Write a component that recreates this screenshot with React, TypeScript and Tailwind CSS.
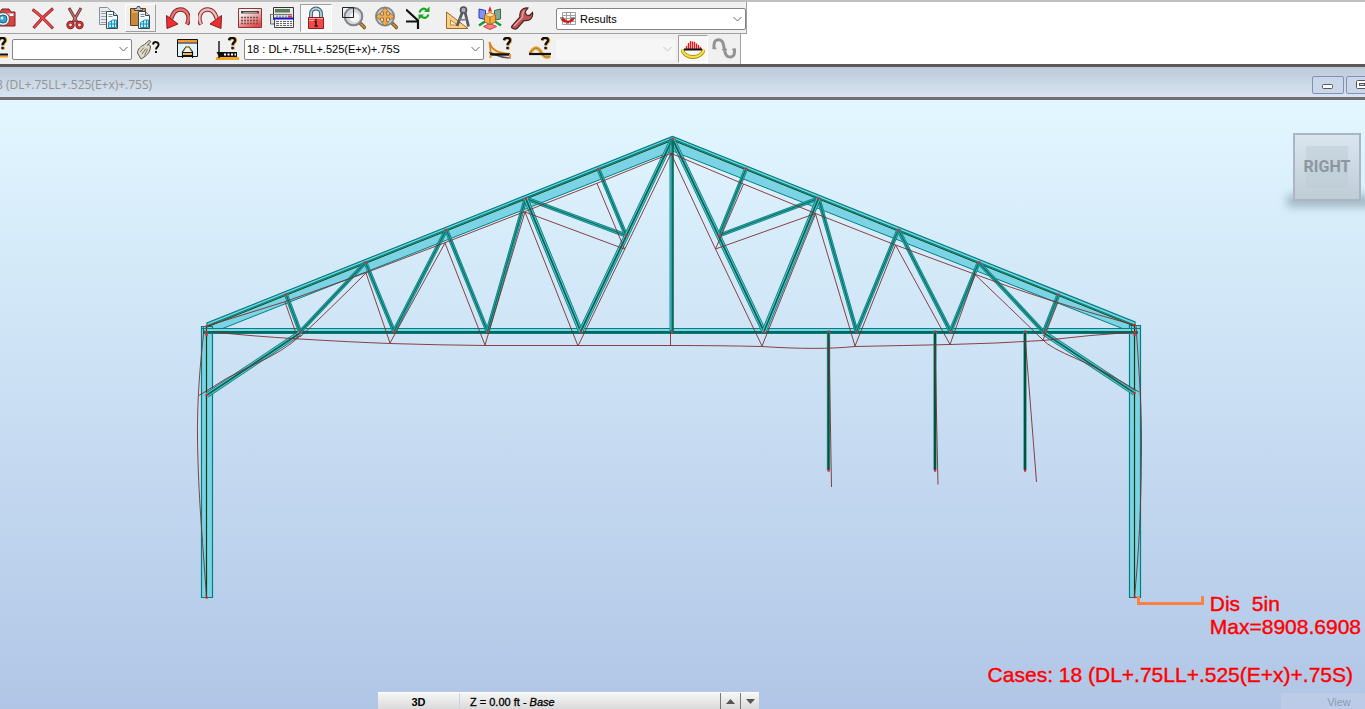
import React from "react";

type P = [number, number];

const Icon = ({ children, className = "" }: { children: React.ReactNode; className?: string }) => (
  <svg viewBox="0 0 24 24" className={`h-6 w-6 shrink-0 ${className}`} fill="none" aria-hidden="true">
    {children}
  </svg>
);

const CameraIcon = () => (
  <Icon>
    <path d="M2 6h6l2-3h7l2 3h4v14H2z" fill="#d94343" stroke="#7e2020" />
    <path d="M3 7h19v3H3z" fill="#f39a9a" />
    <circle cx="11" cy="13" r="6.500" fill="#e8eef2" stroke="#555" />
    <circle cx="11" cy="13" r="4" fill="#3aa0cc" stroke="#23607c" />
    <circle cx="10" cy="12" r="1.500" fill="#c9f1ff" />
    <path d="M18 8h3v2h-3z" fill="#fff" />
  </Icon>
);
const DeleteIcon = () => (
  <Icon>
    <path d="M1.500 3.500C8 8 15 15 22 22.500M22 2.500C14 9 9 14 2.500 22" stroke="#8c2a2a" strokeWidth="3" />
    <path d="M2 4C8 8 15 15 21.500 22M21.500 3C14 9 9 14 3 21.500" stroke="#ee4a4a" strokeWidth="1.600" />
  </Icon>
);
const CutIcon = () => (
  <Icon>
    <path d="M6 2L14 16M18 2L10 16" stroke="#774040" strokeWidth="3" />
    <path d="M6.500 3L13.500 15M17.500 3L10.500 15" stroke="#d77" strokeWidth="1" />
    <circle cx="7.500" cy="19" r="2.800" stroke="#8f1d1d" strokeWidth="2.800" />
    <circle cx="16.500" cy="19" r="2.800" stroke="#8f1d1d" strokeWidth="2.800" />
    <circle cx="7.500" cy="19" r="2.800" stroke="#e04848" strokeWidth="1" />
    <circle cx="16.500" cy="19" r="2.800" stroke="#e04848" strokeWidth="1" />
  </Icon>
);
const Page = () => (
  <>
    <path d="M11.500 5.500h7l4 4v13h-11z" fill="#f7fbfd" stroke="#3f474c" />
    <path d="M18.500 5.500v4h4" fill="#c9d3d8" stroke="#3f474c" />
    <path d="M13.500 8.500h4M13.500 10.500h4" stroke="#6c8da0" />
    <path d="M13.500 21.500v-5l4-2.500h4v7.500zM13.500 18h8M16.500 15v6.500M19.500 14v7.500" stroke="#1494c2" fill="#bfe8f7" />
  </>
);
const CopyIcon = () => (
  <Icon>
    <path d="M4.500 1.500h8l4 4v13h-12z" fill="#e9edf0" stroke="#888f94" />
    <path d="M6 5.500h5M6 7.500h5M6 10.500h5M6 13.500h5M6 16.500h5" stroke="#93a3ad" />
    <Page />
  </Icon>
);
const PasteIcon = () => (
  <Icon>
    <path d="M1.500 2.500h15v17h-15z" fill="#c58a3c" stroke="#6b4513" />
    <path d="M3 4h12v3H3z" fill="#dfa85a" />
    <path d="M5.500 4.500v-2h2l1-2h2l1 2h2v2z" fill="#c5c9cc" stroke="#444" />
    <g transform="translate(-2 0)"><Page /></g>
  </Icon>
);
const UndoIcon = ({ flip = false }: { flip?: boolean }) => (
  <Icon className={flip ? "-scale-x-100" : ""}>
    <path d="M21 18.500c4-8 0-15-7-15-5 0-7.500 4.500-9 9.500" stroke="#7c2a2a" strokeWidth="4.400" />
    <path d="M21 18c4-7.500 0-14.500-7-14.500-5 0-7.500 4.500-9 9.500" stroke={flip ? "#f4b8b8" : "#f07070"} strokeWidth="2.400" />
    <path d="M.500 9.500l.500 13L12 18z" fill="#ec2f2f" stroke="#8c2020" />
  </Icon>
);
const Calc = ({ blue = false }: { blue?: boolean }) => (
  <Icon>
    <defs>
      <linearGradient id="calcBody" x1="0" y1="0" x2="0.600" y2="1">
        <stop offset="0.300" stopColor="#f6eeee" />
        <stop offset="1" stopColor="#e84a4a" />
      </linearGradient>
    </defs>
    {blue ? (
      <>
        <path d="M3.500 1.500h20v12h-20z" fill="#e6e9e6" stroke="#333" />
        <path d="M5 3h15v3.500H5z" fill="#5d7a5d" />
        <path d="M1 8.500h21" stroke="#777" />
        <path d="M6 10.500h12" stroke="#999" strokeWidth="2" strokeDasharray="2 1" />
        <path d="M18 10.500h4" stroke="#e33" strokeWidth="2" />
        <path d="M.500 8v10h4" stroke="#666" fill="#ddd" />
        <path d="M4.500 12.500h19v9h-19z" fill="#f3f3f3" stroke="#444" />
        <path d="M4 12.500h20" stroke="#1717c9" strokeWidth="2" />
        <path d="M6 15.500h16M6 17.500h16M6 19.500h16" stroke="#666" strokeDasharray="3 1 2 1" />
      </>
    ) : (
      <>
        <path d="M.500 2.500h23v19H.500z" fill="url(#calcBody)" stroke="#8c3838" />
        <path d="M3 5h18v2.500H3z" fill="#4a4444" />
        <path d="M5 6.500h14" stroke="#a99" />
        <path d="M3 11.500h18M3 14.500h18M3 17.500h18" stroke="#6d5555" strokeWidth="1.600" strokeDasharray="2 1" />
      </>
    )}
  </Icon>
);
const LockIcon = () => (
  <Icon>
    <path d="M7 13V7.500a5 5 0 0110 0V13" stroke="#445a66" strokeWidth="3.800" />
    <path d="M7 13V7.500a5 5 0 0110 0V13" stroke="#a8d4e6" strokeWidth="1.800" />
    <path d="M4.500 11.500h15v11h-15z" fill="#ee4b4b" stroke="#8c2020" />
    <path d="M5 12.500h14M5 14.500h5" stroke="#fba6a6" />
    <path d="M10.500 15.500h2M12 15v5M10.500 20h3.500M12 12.800v1.500" stroke="#4c0d0d" strokeWidth="1.600" />
  </Icon>
);
const Lens = () => (
  <>
    <path d="M17.500 16.500l6 6" stroke="#6d4b18" strokeWidth="3.600" />
    <path d="M18.500 17.500l4.500 4.500" stroke="#d49a45" strokeWidth="1.600" />
  </>
);
const ZoomWindowIcon = () => (
  <Icon>
    <Lens />
    <circle cx="11.500" cy="10.500" r="8.800" fill="#d3d5d7" stroke="#7f8589" strokeWidth="2" />
    <circle cx="12.500" cy="11.500" r="5" fill="#f4f4f4" />
    <path d="M.500 1.500h11v10H.500z" stroke="#222" />
  </Icon>
);
const ZoomAllIcon = () => (
  <Icon>
    <Lens />
    <circle cx="11" cy="10.500" r="9" fill="#d0d8dd" stroke="#82898e" strokeWidth="2" />
    <path d="M11 1.500l4 4.500h-2.500v3h3V6.500L20.500 10.500l-5 4V12h-3v3.500H15L11 20l-4-4.500h2.500V12h-3v2.500L2 10.500l4.500-4V9h3V6H7z" fill="#f2ab45" stroke="#95602a" strokeWidth=".8" />
  </Icon>
);
const AxesRefreshIcon = () => (
  <Icon>
    <path d="M0 3.500l12 11V23M0 15.500h12" stroke="#111" strokeWidth="2.200" />
    <path d="M13.500 6.500C14.500 3 18 1.500 20.500 4" stroke="#17a81c" strokeWidth="2.200" />
    <path d="M23.500.500V6h-5.500z" fill="#17a81c" />
    <path d="M22.500 8.500C21.500 12 18 13 15.500 10.500" stroke="#17a81c" strokeWidth="2.200" />
    <path d="M12.500 14V8.500H18z" fill="#17a81c" />
  </Icon>
);
const DesignIcon = () => (
  <Icon>
    <path d="M.500 6v16.500H22z" fill="#f8cf85" stroke="#9a682a" />
    <path d="M4.500 14v5h7z" fill="#fff4db" stroke="#b5853f" />
    <path d="M16.500 6l-5.500 14M19 6l3.500 14.500" stroke="#555b60" strokeWidth="2.800" />
    <circle cx="17.500" cy="4" r="3" fill="#a9adb0" stroke="#4e5357" strokeWidth="1.600" />
    <path d="M13.500 12.500c3 2 5 2 7 0" stroke="#7b8185" strokeWidth="1.600" />
  </Icon>
);
const CubeIcon = () => (
  <Icon>
    <path d="M1 3l6.500 1.500v9L1 12z" fill="#8394ee" stroke="#2638c3" />
    <path d="M16.500 4.500L22.500 3v10l-6 1z" fill="#84a894" stroke="#3d6550" />
    <path d="M1 19.500l6-4M23 19.500l-6-4" stroke="#159c38" strokeWidth="2.600" />
    <path d="M5.500 20.500l6.500-3 6.500 3-6.500 3z" fill="#f48484" stroke="#d43b3b" />
    <path d="M6.500 9l5.500-2.500L17.500 9v7L12 18.500 6.500 16z" fill="#f4ac42" stroke="#9e6c20" />
    <path d="M6.500 9l5.500 2 5.500-2L12 6.500z" fill="#ffe2a6" stroke="#9e6c20" strokeWidth=".6" />
    <path d="M12 11v7.500" stroke="#9e6c20" />
    <path d="M12 0l2 5.500h-4z" fill="#e22222" />
  </Icon>
);
const WrenchIcon = () => (
  <Icon>
    <path d="M2 20l8-9c-1-5 2-10 8-9l-3 4 1.500 3 3 .500 3-3c1 6-3 9-8.500 8L7 22.500c-2 1.500-7-.500-5-2.500z" fill="#bf5555" stroke="#4c2525" strokeWidth="1.200" />
    <path d="M4 20l8.500-9c-.500-3 .500-5 2-6.500" stroke="#ee9a9a" strokeWidth="1.600" />
  </Icon>
);
const Question = ({ x = 12, y = 0 }: { x?: number; y?: number }) => (
  <g transform={`translate(${x} ${y})`}>
    <path d="M1.500 3.500C2 0 8.500 0 8 3.500 8 5.500 5.500 5.500 5.500 8.500M5.500 10v2.500" stroke="#f6a623" strokeWidth="2.600" />
    <path d="M1 3.200C1.500 0 7.500 0 7 3.500 7 5.500 4.500 5.500 4.500 8.200M4.500 9.800v2.400" stroke="#111" strokeWidth="2.400" />
  </g>
);
const HalfQueryIcon = () => (
  <Icon>
    <Question x={14} />
    <path d="M4 19.500h20" stroke="#f6a623" strokeWidth="2" />
    <path d="M2 17.500h22" stroke="#111" strokeWidth="2" />
  </Icon>
);
const HandIcon = () => (
  <Icon>
    <path d="M1.500 16c0-4 3-6.500 7-8.500l4.500-4c1.500 0 2 1 1 2L11.500 8c2-.500 3 .500 3 2-.500 4-2 7-5 9L5 22z" fill="#dddac8" stroke="#59594f" />
    <path d="M4 15l4-4.500M6 17l4-5.500M8.500 18.500l3-6.500" stroke="#77756a" />
    <path d="M17 7.500c.500-3.500 6-3 5.500.500 0 2-2.500 2-2.500 4.500M20 14v2" stroke="#111" strokeWidth="2" />
  </Icon>
);
const WindowIcon = () => (
  <Icon>
    <path d="M1.500 2.500h20v17h-20z" fill="#dff5fd" stroke="#111" />
    <path d="M2 3h19v2.500H2z" fill="#ff9a2e" />
    <path d="M2 6h19" stroke="#111" />
    <path d="M6.500 21v-6l3.500-5h3l3.500 5v6M7 15.500h10M6.500 18.500h10" stroke="#111" strokeWidth="1.200" />
    <path d="M7.500 14.500l3-4.500h2l3 4.500" stroke="#f6a623" />
    <path d="M8 17h8" stroke="#f6a623" strokeWidth="1.600" />
  </Icon>
);
const LoadIcon = () => (
  <Icon>
    <path d="M0 21.500h23" stroke="#f6a623" strokeWidth="3" />
    <path d="M3 4v17" stroke="#111" strokeWidth="1.400" />
    <path d="M.500 15L3 20 5.500 15z" fill="#111" />
    <path d="M3 15h18v5H3z" fill="#111" />
    <path d="M8 17.500h12" stroke="#fff" strokeWidth="2" strokeDasharray="2 1.500" />
    <Question />
  </Icon>
);
const MomentIcon = () => (
  <Icon>
    <path d="M1.500 5c2 8 8 11 20 12H3z" fill="#f5e3c0" stroke="#d9861b" strokeWidth="1.800" />
    <path d="M1 15.500c7 1 12 7 22 5" stroke="#555" strokeWidth="1.600" />
    <path d="M2 17.500h20" stroke="#111" strokeWidth="2.400" />
    <path d="M2.500 18v3M22 17v4" stroke="#e8951f" strokeWidth="2" />
    <Question x={15} />
  </Icon>
);
const InfluenceIcon = () => (
  <Icon>
    <path d="M2 16.500C6 9 10 10 13 15c2 4.500 6 6.500 9 4" stroke="#f6a623" strokeWidth="3.500" />
    <path d="M2 16.500C6 9 10 10 13 15c2 4.500 6 6.500 9 4" stroke="#777" strokeWidth="1" />
    <path d="M1 17h22" stroke="#111" strokeWidth="2.200" />
    <Question x={13} />
  </Icon>
);
const DiagramIcon = () => (
  <Icon>
    <path d="M1 12.500c3 10 19 10 22 0" stroke="#a88c1c" strokeWidth="3.800" />
    <path d="M1 12.500c3 10 19 10 22 0" stroke="#fbe33a" strokeWidth="2.200" />
    <path d="M4 12c1-4 4-7 6-8l4 1 4 3 3 4z" fill="#fbd0d0" />
    <path d="M5.500 12V9M7.500 12V6M9.500 12V4M11.500 12V4.500M13.500 12V5M15.500 12V6.500M17.500 12V8M19.500 12v-2" stroke="#e31b1b" strokeWidth="1.200" />
    <path d="M3 12.500h18" stroke="#111" strokeWidth="2" />
  </Icon>
);
const WaveIcon = () => (
  <Icon>
    <path d="M.500 11.500h4M10 12.500h5M20 12.500h3.500" stroke="#999" strokeWidth="1.600" />
    <path d="M2 11.500V8c0-7 8.500-7 9.500 0L13 15c1.500 7 9.500 6.500 9.500 0v-3.500" stroke="#929292" strokeWidth="3" />
  </Icon>
);
const ResultsIcon = () => (
  <svg viewBox="0 0 16 16" className="pointer-events-none absolute top-[3px] left-1 h-4 w-4" fill="none" aria-hidden="true">
    <path d="M2.500 1.500h13v12h-13zM2.500 4.500h13M2.500 7.500h13M2.500 10.500h13M6.500 1.500v12M10.500 1.500v12" fill="#fff" stroke="#a0a0a0" />
    <path d="M1 8h4l1.500 1.500h3L11 8h3v1l-3.500 2.500h-1L8 13l-1.500-1.500H4L1 9z" fill="#d81919" />
    <path d="M0 7h4M11 7h4" stroke="#333" />
  </svg>
);

const Tool = ({ label, children, className = "w-8" }: { label: string; children: React.ReactNode; className?: string }) => (
  <button type="button" aria-label={label} className={`flex h-[28px] shrink-0 items-center justify-center ${className}`}>
    {children}
  </button>
);

const Combo = ({ label, value, disabled = false, className, textClass = "pl-1", children }: {
  label: string; value: string; disabled?: boolean; className: string; textClass?: string; children?: React.ReactNode;
}) => (
  <div className={`relative shrink-0 ${className}`}>
    <select
      aria-label={label}
      disabled={disabled}
      defaultValue={value}
      className={`block h-full w-full appearance-none rounded-[2px] border text-[11px] leading-4 text-black outline-none ${disabled ? "border-[#f4f4f4] bg-[#f6f6f6]" : "border-[#858585] bg-white"} ${textClass}`}
    >
      <option>{value}</option>
    </select>
    {children}
    <svg viewBox="0 0 9 6" className="pointer-events-none absolute top-1/2 right-1 h-1.5 w-[9px] -translate-y-1/2" fill="none" aria-hidden="true">
      <path d="M.500 1l4 4 4-4" stroke={disabled ? "#c0c0c0" : "#666"} />
    </svg>
  </div>
);

const webs: [P, P][] = [
  [[286, 294.5], [300, 331.5]],
  [[365.5, 262.5], [300, 332]],
  [[365.5, 262.5], [394, 331.5]],
  [[446.3, 229.7], [394, 331.5]],
  [[446.3, 229.7], [487.5, 331.5]],
  [[525.7, 198.3], [487.5, 331.5]],
  [[525.7, 198.3], [626, 235.5]],
  [[598.3, 168.7], [626, 235.5]],
  [[746, 168.7], [719, 235.5]],
  [[818.5, 198.3], [719, 235.5]],
  [[818.5, 198.3], [856.5, 331.5]],
  [[898.3, 229.7], [856.5, 331.5]],
  [[898.3, 229.7], [950.5, 331.5]],
  [[978.7, 262.5], [950.5, 331.5]],
  [[978.7, 262.5], [1043.5, 332]],
  [[1058.5, 294.5], [1044, 331.5]],
];
const heavyWebs: [P, P][] = [
  [[525.7, 198.3], [580.7, 331.5]],
  [[672.5, 139], [580.7, 331.5]],
  [[672.5, 139], [764, 331.5]],
  [[818.5, 198.3], [764, 331.5]],
  [[300, 333], [207, 395]],
  [[1044, 333], [1134.5, 393]],
];
const hangers = [828.5, 935, 1025];

const nodes: P[] = [
  [206.5, 326], [206.5, 332], [206.5, 335], [206.5, 395], [206.5, 597.5],
  [1134.5, 325], [1134.5, 332], [1134.5, 335], [1134.5, 393], [1134.5, 597],
  [285.5, 294.5], [365.5, 262.5], [446.3, 229.7], [525.7, 198.3], [598.3, 168.7], [672.5, 138.7],
  [746, 168.7], [818.5, 198.3], [898.3, 229.7], [978.7, 262.5], [1058.5, 294.5],
  [300, 332], [394, 332], [487.5, 332], [580.7, 332], [672, 332], [764, 332], [856.5, 332], [950.5, 332], [1044, 332],
  [626, 235.5], [719, 235.5], [828.5, 331.5], [935, 331.5], [1025, 331.5],
  [828.5, 470.5], [935, 470.5], [1025, 470.5],
];

const deformed = [
  "M207 326L285 301.700L366 272.700L445 242.700L525 211.500L597 183.300L671 153.300L743.500 184L815.500 213.500L895.500 245L975 274.300Q1040 299 1134 325",
  "M285 302L298 339M366 273Q330 309 300 337M366 273L390 343L445 243L485 345L525 212L578 346L671 153.500L715.500 249L762 346L815.500 214L855 346L895.500 245L950 344.500L975 274.500Q1008 306 1043 340L1058 302",
  "M525 212L624.500 249L597 183.500M815.500 213.500L715.500 249L743.500 184M670.500 333V346",
  "M213 332Q250 336 300 339T390 343.500Q437 345 485 345.500H670Q720 345.500 762 346.500C800 349 830 349 855 346.500Q905 345.500 950 344.500T1043 340.500Q1090 335 1134 332",
  "M204 330C200 365 197 400 197.500 440C198.500 500 202 530 206.500 598",
  "M199 395.500Q226 377 255 364T300 336",
  "M1136 326C1139 370 1142 410 1141.500 450C1141 510 1139 550 1134.500 597",
  "M1139 392Q1105 371 1077 359T1043 340",
  "M829 340L831.500 487M935 345L938 484.500M1025.500 342L1036.500 482",
];

const Structure = () => (
  <svg
    viewBox="0 100 1365 609"
    preserveAspectRatio="xMidYMin meet"
    className="absolute inset-0 h-full w-full"
    fill="none"
    role="img"
    aria-label="Truss frame with deformed shape"
  >
    <g fill="#7bd3e5" stroke="#008080" strokeWidth="1.200">
      <path d="M207 322.700L672.500 136L1135 321.700V331.500H1130L672.500 151L215 331.500H207z" stroke="none" />
      <path d="M207 327V323L672.500 136.500L1135 322V326" fill="none" />
      <path d="M207 325.800L672.500 139L1134 324.800" fill="none" />
      <path d="M215 331.500L672.500 151L1130 331.500" fill="none" strokeWidth="1" />
      <path d="M201.500 326.500H212.500V597.500H201.500z" />
      <path d="M1129.500 325.500H1140.500V597.500H1129.500z" />
    </g>
    <path d="M207 327L672.500 140.200L1134 326" stroke="#0a4d16" strokeWidth="1" />
    <path d="M206.500 326V598M1134.500 325V597" stroke="#063f10" strokeWidth="1.200" />
    <path d="M202 328.500H1140" stroke="#008080" />
    <path d="M207 330.500H1134" stroke="#7bd3e5" strokeWidth="3" />
    <path d="M204 332.500H1138" stroke="#00807c" strokeWidth="3" />
    <path d="M207 332H1134" stroke="#005040" strokeWidth="1" />
    <path d="M203.500 327V334M1131.500 326V334" stroke="#008080" />
    {webs.map(([a, b], i) => (
      <g key={i}>
        <path d={`M${a}L${b}`} stroke="#0a8280" strokeWidth="4" />
        <path d={`M${a}L${b}`} stroke="#4bb2b6" strokeWidth="2.400" />
        <path d={`M${a}L${b}`} stroke="#007468" strokeWidth="1.300" />
      </g>
    ))}
    {heavyWebs.map(([a, b], i) => (
      <g key={i}>
        <path d={`M${a}L${b}`} stroke="#0a8280" strokeWidth="5.200" />
        <path d={`M${a}L${b}`} stroke="#70cddb" strokeWidth="3.400" />
        <path d={`M${a}L${b}`} stroke="#00695a" strokeWidth="1.800" />
      </g>
    ))}
    <path d="M671.500 139V332" stroke="#0e8583" strokeWidth="4" />
    <path d="M670.800 145V330" stroke="#52b4bd" strokeWidth="1.200" />
    <path d="M673 141V332" stroke="#006048" strokeWidth="1.200" />
    {hangers.map((x) => (
      <g key={x}>
        <path d={`M${x} 332V470`} stroke="#3c9c9a" strokeWidth="3.400" />
        <path d={`M${x} 332V470`} stroke="#00543c" strokeWidth="2" />
      </g>
    ))}
    <g stroke="#7d2f30" strokeWidth=".9">
      {deformed.map((d) => <path key={d} d={d} />)}
    </g>
    {nodes.map(([x, y], i) => <rect key={i} x={x - 1} y={y - 1} width="2.200" height="2.200" fill="#e62424" />)}
    <path d="M1138.500 596V603.500H1202.500V596" stroke="#ff8040" strokeWidth="3" />
  </svg>
);

export default function App() {
  return (
    <div className="flex min-h-screen flex-col overflow-hidden bg-white font-['Liberation_Sans',Arial,sans-serif]">
      <header className="border-t-2 border-[#c0c0c0]">
        <div role="toolbar" aria-label="Standard" className="flex h-8 w-max items-center border-r border-b border-[#a0a0a0] bg-[#f0f0f0]">
          <Tool label="Screen capture" className="-ml-2 w-[35px] pr-3"><CameraIcon /></Tool>
          <Tool label="Delete"><DeleteIcon /></Tool>
          <Tool label="Cut"><CutIcon /></Tool>
          <Tool label="Copy"><CopyIcon /></Tool>
          <Tool label="Paste" className="ml-0.5 w-[31px] border border-t-white border-r-[#a0a0a0] border-b-[#a0a0a0] border-l-white"><PasteIcon /></Tool>
          <Tool label="Undo" className="ml-1.5 w-8"><UndoIcon /></Tool>
          <Tool label="Redo"><UndoIcon flip /></Tool>
          <Tool label="Calculations" className="ml-2 w-8"><Calc /></Tool>
          <Tool label="Calculation report"><Calc blue /></Tool>
          <Tool label="Lock results" className="ml-0.5 w-8 border border-t-[#a0a0a0] border-r-white border-b-white border-l-[#a0a0a0] bg-[#f8f8f8]"><LockIcon /></Tool>
          <Tool label="Zoom window" className="ml-1.5 w-8"><ZoomWindowIcon /></Tool>
          <Tool label="Zoom all"><ZoomAllIcon /></Tool>
          <Tool label="Refresh view"><AxesRefreshIcon /></Tool>
          <Tool label="Design" className="ml-2 w-8"><DesignIcon /></Tool>
          <Tool label="3D view"><CubeIcon /></Tool>
          <Tool label="Tools"><WrenchIcon /></Tool>
          <Combo label="Layout" value="Results" className="mt-0.5 ml-[18px] h-[22px] w-[190px]" textClass="pl-[23px]">
            <ResultsIcon />
          </Combo>
        </div>
        <div role="toolbar" aria-label="Selection" className="flex h-[30px] w-max items-center border-r border-[#a0a0a0] bg-[#f0f0f0]">
          <Tool label="Node query" className="-ml-6 w-9 justify-end pr-1"><HalfQueryIcon /></Tool>
          <Combo label="Selection" value="" className="h-[21px] w-[120px]" />
          <Tool label="Pick"><HandIcon /></Tool>
          <Tool label="View window" className="ml-2 w-8"><WindowIcon /></Tool>
          <Tool label="Load case query" className="ml-2 w-8"><LoadIcon /></Tool>
          <Combo label="Load case" value="18 : DL+.75LL+.525(E+x)+.75S" className="h-[21px] w-[240px]" textClass="pl-0.5" />
          <Tool label="Mode query"><MomentIcon /></Tool>
          <Tool label="Component query" className="ml-2 w-8"><InfluenceIcon /></Tool>
          <Combo label="Mode" value="" disabled className="h-[21px] w-[120px]" />
          <Tool label="Diagrams" className="ml-0.5 w-[30px] border border-t-[#a0a0a0] border-r-white border-b-white border-l-[#a0a0a0] bg-[#f8f8f8]"><DiagramIcon /></Tool>
          <Tool label="Dynamics"><WaveIcon /></Tool>
        </div>
      </header>

      <div className="flex h-9 items-center justify-between border-t-[3px] border-b-[3px] border-t-[#5c5857] border-b-[#75706f] bg-linear-to-b from-[#bccad9] to-[#d8e4f1]">
        <h1 className="-ml-1 pt-1.5 font-['Open_Sans','Noto_Sans',sans-serif] text-[12px] leading-4 whitespace-nowrap text-[#949494]">8 (DL+.75LL+.525(E+x)+.75S)</h1>
        <div className="-mr-[13px] flex gap-0.5 pt-1.5">
          <button type="button" aria-label="Minimize" className="flex h-[18px] w-8 items-center justify-center rounded-[2px] border border-[#8291b5] bg-[#c9d7e9]">
            <svg viewBox="0 0 12 6" className="mt-1 h-1.5 w-3" aria-hidden="true"><rect x=".5" y=".5" width="10" height="4" rx="1" fill="#fff" stroke="#555562" /></svg>
          </button>
          <button type="button" aria-label="Restore" className="flex h-[18px] w-8 items-center justify-center rounded-[2px] border border-[#8291b5] bg-[#c9d7e9]">
            <svg viewBox="0 0 12 10" className="h-2.5 w-3" aria-hidden="true"><rect x=".5" y=".5" width="11" height="8" rx="1" fill="#fff" stroke="#555562" /><rect x="3.500" y="3.500" width="5" height="2" fill="#c9d7e9" stroke="#555562" /></svg>
          </button>
        </div>
      </div>

      <main className="relative min-h-[609px] flex-1 overflow-hidden bg-linear-to-b from-[#e2f7ff] to-[#b1c6e6]">
        <Structure />

        <div className="absolute top-[33px] right-1">
          <div className="absolute -right-3 -bottom-1.5 -left-1.5 h-3 bg-[#5d7480]/45 blur-[4px]" />
          <button type="button" className="relative flex h-[68px] w-[68px] items-center justify-center border-2 border-[#a9b6c4] bg-linear-to-b from-[#dae6ef] to-[#c0cdd6]">
            <span className="flex h-[42px] w-[42px] items-center justify-center bg-[#bccbd4]/50 font-['Roboto',sans-serif] text-[16px] leading-5 font-bold text-[#8b979f]">RIGHT</span>
          </button>
        </div>

        <div className="absolute right-1 bottom-[71px] text-[21px] leading-[23px] text-[#ff0000] [-webkit-text-stroke:0.4px_#ff0000]">
          <p className="whitespace-pre">Dis  5in</p>
          <p>Max=8908.6908</p>
        </div>
        <p className="absolute right-3 bottom-[23px] text-[21px] leading-[23px] whitespace-nowrap text-[#ff0000] [-webkit-text-stroke:0.4px_#ff0000]">Cases: 18 (DL+.75LL+.525(E+x)+.75S)</p>

        <div className="absolute bottom-0 left-[378px] flex h-[17px] border-t border-white bg-linear-to-b from-[#f6f6f6] to-[#dadada] text-[11px] leading-4 text-black">
          <button type="button" className="w-[82px] border-r border-[#c6d3e8] pt-px font-bold">3D</button>
          <span className="w-[260px] pt-px pl-2.5 [-webkit-text-stroke:0.3px_black]">Z = 0.00 ft - <i>Base</i></span>
          <button type="button" aria-label="Level up" className="flex w-5 items-center justify-center border-l border-[#777]">
            <svg viewBox="0 0 9 5" className="h-[5px] w-[9px]" aria-hidden="true"><path d="M0 5l4.500-5L9 5z" fill="#555" /></svg>
          </button>
          <button type="button" aria-label="Level down" className="flex w-[19px] items-center justify-center border-l border-[#777]">
            <svg viewBox="0 0 9 5" className="h-[5px] w-[9px]" aria-hidden="true"><path d="M0 0l4.500 5L9 0z" fill="#555" /></svg>
          </button>
        </div>
        <button type="button" className="absolute right-0 bottom-0 h-4 w-[84px] bg-[#bccce8] pt-px pl-8 text-[11px] leading-4 text-[#8b9bb4]">View</button>
      </main>
    </div>
  );
}
